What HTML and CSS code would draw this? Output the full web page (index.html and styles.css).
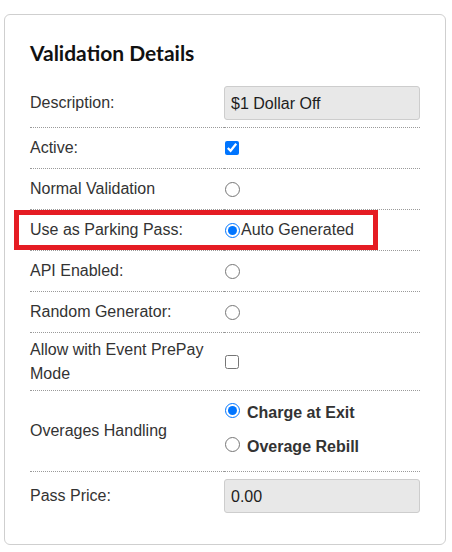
FILE: index.html
```html
<!DOCTYPE html>
<html>
<head>
<meta charset="utf-8">
<link rel="stylesheet" href="styles.css">
</head>
<body>
<div class="card">
  <h2 class="title">Validation Details</h2>
  <div class="rows">
    <div class="row">
      <div class="label">Description:</div>
      <div class="value"><div class="field">$1 Dollar Off</div></div>
    </div>
    <div class="row">
      <div class="label">Active:</div>
      <div class="value"><input type="checkbox" class="check" checked></div>
    </div>
    <div class="row">
      <div class="label">Normal Validation</div>
      <div class="value"><input type="radio" class="radio" name="v1"></div>
    </div>
    <div class="row row-highlight">
      <div class="label">Use as Parking Pass:</div>
      <div class="value"><label class="opt"><input type="radio" class="radio" name="v2" checked><span class="opt-text">Auto Generated</span></label></div>
      <div class="highlight"></div>
    </div>
    <div class="row">
      <div class="label">API Enabled:</div>
      <div class="value"><input type="radio" class="radio" name="v3"></div>
    </div>
    <div class="row">
      <div class="label">Random Generator:</div>
      <div class="value"><input type="radio" class="radio" name="v4"></div>
    </div>
    <div class="row">
      <div class="label">Allow with Event PrePay<br>Mode</div>
      <div class="value"><input type="checkbox" class="check"></div>
    </div>
    <div class="row">
      <div class="label">Overages Handling</div>
      <div class="value value-stack">
        <div class="group">
          <label class="opt opt-bold"><input type="radio" class="radio" name="ov" checked><span class="bold-text">Charge at Exit</span></label>
          <label class="opt opt-bold"><input type="radio" class="radio" name="ov"><span class="bold-text">Overage Rebill</span></label>
        </div>
      </div>
    </div>
    <div class="row row-last">
      <div class="label">Pass Price:</div>
      <div class="value"><div class="field">0.00</div></div>
    </div>
  </div>
</div>
</body>
</html>
```

FILE: styles.css
```css
html, body {
  margin: 0;
  padding: 0;
  background: #fff;
}
body {
  font-family: "Liberation Sans", Arial, sans-serif;
  font-size: 16px;
  color: #333;
}
.card {
  box-sizing: border-box;
  width: 442px;
  margin: 14px 0 0 4px;
  border: 1px solid #cfcfcf;
  border-radius: 6px;
  padding: 26px 24px 24px 25px;
}
.title {
  margin: 0 0 14px 0;
  font-family: Lato, "Open Sans", sans-serif;
  font-weight: 700;
  font-size: 21px;
  line-height: 24px;
  color: #111;
}
.rows {
  display: flex;
  flex-direction: column;
}
.row {
  position: relative;
  display: grid;
  grid-template-columns: 194px 196px;
}
.label, .value {
  display: flex;
  align-items: center;
  min-height: 30px;
  padding: 5px 0;
  line-height: 23.5px;
  border-bottom: 1px dotted #9a9a9a;
}
.row-last .label, .row-last .value {
  border-bottom: none;
}
.field {
  box-sizing: border-box;
  width: 196px;
  height: 34px;
  margin: 2px 0;
  padding: 1px 6px 0;
  background: #e8e8e8;
  border: 1px solid #cdcdcd;
  border-radius: 3px;
  color: #1d1d1d;
  line-height: 32px;
}
.check {
  width: 14px;
  height: 14px;
  margin: 0 0 0 1px;
}
.radio {
  width: 15px;
  height: 15px;
  margin: 0 0 0 1px;
}
.opt {
  display: flex;
  align-items: center;
}
.opt-text {
  margin-left: 1px;
}
.value-stack {
  align-items: flex-start;
}
.group {
  display: flex;
  flex-direction: column;
  margin: 0 0 2px 0;
}
.opt-bold {
  height: 34px;
}
.opt-bold .radio {
  margin-bottom: 5px;
}
.bold-text {
  margin-left: 7px;
  font-weight: 700;
}
.highlight {
  position: absolute;
  left: -16px;
  top: 0;
  width: 364px;
  height: 40px;
  box-sizing: border-box;
  border: 5px solid #e51c23;
  pointer-events: none;
}
```
